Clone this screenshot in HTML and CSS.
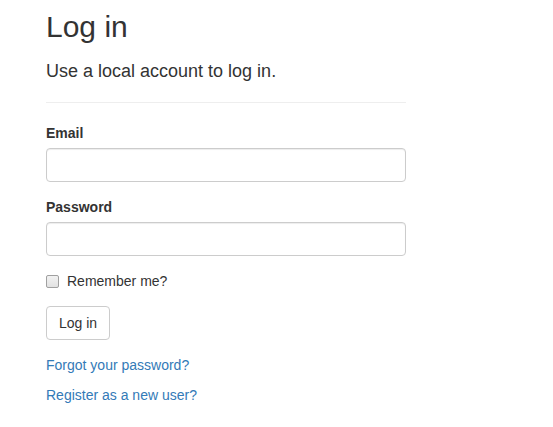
FILE: index.html
```html
<!DOCTYPE html>
<html>
<head>
<meta charset="utf-8">
<link rel="stylesheet" href="styles.css">
</head>
<body>
<div class="page">
  <h2 class="title">Log in</h2>
  <section class="login">
    <form>
      <h4 class="subtitle">Use a local account to log in.</h4>
      <hr class="rule">
      <div class="form-group">
        <label class="field-label" for="email">Email</label>
        <input class="form-control" id="email" type="email">
      </div>
      <div class="form-group">
        <label class="field-label" for="password">Password</label>
        <input class="form-control" id="password" type="password">
      </div>
      <div class="check-row">
        <label class="check-label"><input class="check-box" type="checkbox"> Remember me?</label>
      </div>
      <div class="btn-row">
        <button class="btn" type="button">Log in</button>
      </div>
      <p class="link-line"><a href="#">Forgot your password?</a></p>
      <p class="link-line"><a href="#">Register as a new user?</a></p>
    </form>
  </section>
</div>
</body>
</html>
```
FILE: styles.css
```css
html, body {
  margin: 0;
  padding: 0;
  background: #fff;
}
body {
  font-family: "Liberation Sans", Arial, Helvetica, sans-serif;
  font-size: 14px;
  line-height: 20px;
  color: #333;
}
.page {
  padding-left: 46px;
  width: 360px;
}
.title {
  margin: 0;
  padding-top: 10px;
  font-size: 30px;
  line-height: 33px;
  font-weight: 400;
}
.subtitle {
  margin: 18px 0 0;
  font-size: 18px;
  line-height: 20px;
  font-weight: 400;
}
.rule {
  margin: 21px 0 0;
  border: 0;
  border-top: 1px solid #eee;
  height: 0;
}
.form-group {
  margin-bottom: 15px;
}
.form-group:first-of-type {
  margin-top: 20px;
}
.field-label {
  display: inline-block;
  margin-bottom: 5px;
  font-weight: 700;
}
.form-control {
  display: block;
  box-sizing: border-box;
  width: 100%;
  height: 34px;
  margin: 0;
  padding: 6px 12px;
  font: inherit;
  color: #555;
  background: #fff;
  border: 1px solid #ccc;
  border-radius: 4px;
  box-shadow: inset 0 1px 1px rgba(0,0,0,.075);
}
.check-row {
  margin-top: 0;
  margin-bottom: 15px;
}
.check-label {
  display: flex;
  align-items: center;
  gap: 8px;
  font-weight: 400;
}
.check-box {
  appearance: none;
  -webkit-appearance: none;
  width: 13px;
  height: 13px;
  margin: 0;
  box-sizing: border-box;
  border: 1px solid #a0a0a0;
  border-radius: 2px;
  background: linear-gradient(#f2f2f2, #e2e2e2);
}
.btn-row {
  margin-bottom: 15px;
}
.btn {
  display: inline-block;
  box-sizing: border-box;
  height: 34px;
  padding: 6px 12px;
  font: inherit;
  color: #333;
  background: #fff;
  border: 1px solid #ccc;
  border-radius: 4px;
  cursor: pointer;
}
.link-line {
  margin: 0 0 10px;
}
.link-line a {
  color: #337ab7;
  text-decoration: none;
}
```
